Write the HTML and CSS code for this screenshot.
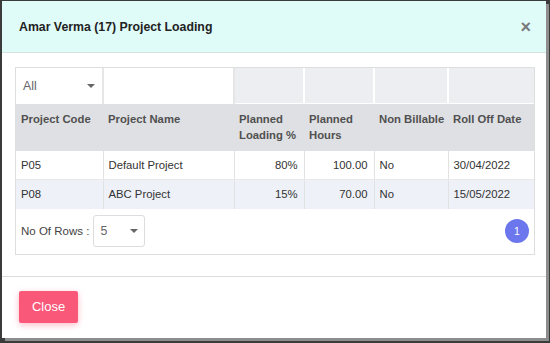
FILE: index.html
```html
<!DOCTYPE html>
<html lang="en">
<head>
    <meta charset="UTF-8">
    <meta name="viewport" content="width=device-width, initial-scale=1.0">
    <title>Project Loading</title>
    <link rel="stylesheet" href="styles.css">
</head>
<body>

    <div class="modal">
        <div class="modal-header">
            <h4 class="modal-title">Amar Verma (17) Project Loading</h4>
            <span class="close-x">&times;</span>
        </div>

        <div class="modal-body">
            <div class="grid">
                <table>
                    <colgroup>
                        <col style="width: 87px">
                        <col style="width: 131px">
                        <col style="width: 70px">
                        <col style="width: 70px">
                        <col style="width: 74px">
                        <col style="width: 86px">
                    </colgroup>
                    <tr class="filter-row">
                        <td class="white">
                            <div class="select">
                                <span>All</span>
                                <span class="caret"></span>
                            </div>
                        </td>
                        <td class="white"><div class="text-input"></div></td>
                        <td></td>
                        <td></td>
                        <td></td>
                        <td></td>
                    </tr>
                    <tr class="head-row">
                        <th>Project Code</th>
                        <th>Project Name</th>
                        <th>Planned Loading %</th>
                        <th>Planned Hours</th>
                        <th class="nowrap">Non Billable</th>
                        <th class="nowrap">Roll Off Date</th>
                    </tr>
                    <tr class="data-row">
                        <td>P05</td>
                        <td>Default Project</td>
                        <td class="num">80%</td>
                        <td class="num">100.00</td>
                        <td>No</td>
                        <td>30/04/2022</td>
                    </tr>
                    <tr class="data-row alt">
                        <td>P08</td>
                        <td>ABC Project</td>
                        <td class="num">15%</td>
                        <td class="num">70.00</td>
                        <td>No</td>
                        <td>15/05/2022</td>
                    </tr>
                </table>

                <div class="grid-footer">
                    <span class="rows-label">No Of Rows :</span>
                    <div class="page-size">
                        <span>5</span>
                        <span class="caret"></span>
                    </div>
                    <span class="page-btn">1</span>
                </div>
            </div>
        </div>

        <div class="modal-footer">
            <button class="close-btn">Close</button>
        </div>
    </div>

</body>
</html>
```

FILE: styles.css
```css
body {
    font-family: 'Liberation Sans', Arial, sans-serif;
    background-color: #3b3b3b;
    margin: 0;
    padding: 1px 0 0 2px;
    height: 343px;
    box-sizing: border-box;
    overflow: hidden;
}

.modal {
    width: 544px;
    height: 337px;
    background: #fff;
    box-shadow: 3px 3px 0 #8d8d8d;
    display: flex;
    flex-direction: column;
}

.modal-header {
    flex-shrink: 0;
    height: 51px;
    background-color: #e0fcf9;
    border-bottom: 1px solid #d3e3e2;
    display: flex;
    align-items: center;
    justify-content: space-between;
    padding: 0 15px 0 17px;
}

.modal-title {
    margin: 0;
    font-size: 12.3px;
    font-weight: bold;
    color: #222;
}

.close-x {
    font-size: 18px;
    font-weight: bold;
    color: #7a7a7a;
    line-height: 1;
}

.modal-body {
    flex-shrink: 0;
    padding: 14px 11px 0 13px;
}

.grid {
    border: 1px solid #dedede;
}

table {
    width: 518px;
    border-collapse: collapse;
    table-layout: fixed;
    font-size: 11.3px;
    color: #333;
}

td, th {
    padding: 0 5px;
    text-align: left;
}

.filter-row td {
    height: 35px;
    padding: 0;
    background-color: #eceef2;
    border-right: 2px solid #fff;
    border-bottom: 1px solid #fff;
}

.filter-row td.white {
    background: #fff;
    border-right: 2px solid #e6e6e6;
}

.filter-row td:last-child {
    border-right: none;
}

.select {
    display: flex;
    align-items: center;
    justify-content: space-between;
    padding: 0 7px 0 7px;
    font-size: 12.3px;
    color: #666;
    height: 34px;
}

.caret {
    width: 0;
    height: 0;
    border-left: 4px solid transparent;
    border-right: 4px solid transparent;
    border-top: 4px solid #666;
}

.text-input {
    height: 34px;
}

.head-row th {
    height: 47px;
    background-color: #dfe0e4;
    vertical-align: top;
    padding-top: 7px;
    padding-bottom: 0;
    box-sizing: border-box;
    font-weight: bold;
    line-height: 16px;
    color: #505050;
}

.head-row th.nowrap {
    white-space: nowrap;
    padding-right: 0;
}

.data-row td {
    height: 29px;
    border-right: 1px solid #e2e2e2;
    border-bottom: 1px solid #e8e8e8;
    box-sizing: border-box;
}

.data-row td:last-child {
    border-right: none;
}

.data-row.alt td {
    background-color: #eef1f8;
    border-bottom: none;
}

.data-row td.num {
    text-align: right;
    padding-right: 6px;
}

.grid-footer {
    height: 45px;
    display: flex;
    align-items: center;
    padding: 0 5px 0 5px;
    font-size: 11.5px;
    color: #444;
}

.rows-label {
    margin-right: 4px;
}

.page-size {
    width: 52px;
    height: 32px;
    box-sizing: border-box;
    border: 1px solid #ddd;
    border-radius: 3px;
    display: flex;
    align-items: center;
    justify-content: space-between;
    padding: 0 6px 0 6px;
    font-size: 12.3px;
    color: #666;
}

.page-btn {
    margin-left: auto;
    width: 24px;
    height: 24px;
    border-radius: 50%;
    background-color: #6c77ee;
    color: #fff;
    font-size: 10.5px;
    display: flex;
    align-items: center;
    justify-content: center;
}

.modal-footer {
    margin-top: 21px;
    border-top: 1px solid #dcdcdc;
    padding: 14px 17px;
}

.close-btn {
    width: 59px;
    height: 32px;
    background-color: #fa5879;
    color: #fff;
    border: none;
    border-radius: 2px;
    font-family: 'Liberation Sans', Arial, sans-serif;
    font-size: 13px;
    box-shadow: 0 2px 6px rgba(250, 88, 121, 0.4);
    cursor: pointer;
}
```
